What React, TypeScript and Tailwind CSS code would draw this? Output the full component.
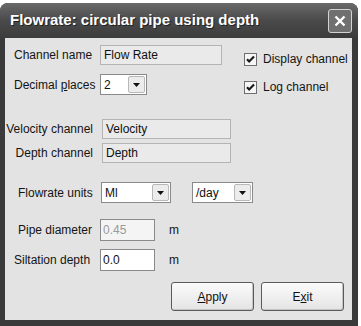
import React from "react";

function Arrow() {
  return (
    <svg width="7" height="4" viewBox="0 0 7 4">
      <path d="M0 0h7L3.5 4z" fill="#111" />
    </svg>
  );
}

function Select({ value, width }: { value: string; width: number }) {
  return (
    <div
      className="flex items-center h-[21px] bg-white border border-[#8a8a8a] p-[1px]"
      style={{ width }}
    >
      <span className="flex-1 pl-[2px] text-[#111]">{value}</span>
      <div className="w-[17px] h-full flex items-center justify-center bg-[#ececec] border border-[#b8b8b8] rounded-[2px]">
        <Arrow />
      </div>
    </div>
  );
}

function ReadonlyField({ value, width }: { value: string; width: number }) {
  return (
    <div
      className="h-[20px] flex items-center pl-[3px] bg-[#eaeaea] border border-[#b4b4b4] text-[#111]"
      style={{ width }}
    >
      {value}
    </div>
  );
}

function TextField({ value, disabled }: { value: string; disabled?: boolean }) {
  return (
    <div
      className={
        "w-[55px] h-[22px] flex items-center pl-[2px] border border-[#8a8a8a] " +
        (disabled ? "bg-[#f4f4f4] text-[#9a9a9a]" : "bg-white text-[#111]")
      }
    >
      {value}
    </div>
  );
}

function Check({ label }: { label: string }) {
  return (
    <div className="flex items-center h-[20px]">
      <div className="w-[13px] h-[13px] bg-[#f6f6f6] border border-[#6e6e6e] flex items-center justify-center">
        <svg width="9" height="9" viewBox="0 0 9 9">
          <path d="M1 4.2l2.2 2.3L8 1.6" stroke="#1a1a1a" strokeWidth="2.2" fill="none" />
        </svg>
      </div>
      <span className="ml-[6px]">{label}</span>
    </div>
  );
}

function Button({ children }: { children: React.ReactNode }) {
  return (
    <div className="w-[83px] h-[29px] flex items-center justify-center rounded-[3px] border border-[#5a5a5a] bg-gradient-to-b from-[#fbfbfb] to-[#e4e4e4] shadow-[inset_-1px_-1px_0_#c4c4c4] text-[#111]">
      {children}
    </div>
  );
}

export default function App() {
  return (
    <div className="w-[361px] h-[326px] bg-white font-['Liberation_Sans',Arial,sans-serif] text-[12px] text-[#141414]">
      <div className="w-[358px] h-[323px] mt-[3px] flex flex-col rounded-t-[8px] bg-[#3a3a3a] overflow-hidden">
        <div className="h-[35px] flex items-center justify-between pl-[10px] pr-[6px] bg-gradient-to-b from-[#6a6a6a] via-[#4a4a4a] to-[#3c3c3c]">
          <span className="text-white font-bold text-[15px] [text-shadow:1px_1px_0_#222]">
            Flowrate: circular pipe using depth
          </span>
          <div className="w-[24px] h-[24px] rounded-[3px] border border-[#d4d4d4] bg-[#707070] flex items-center justify-center">
            <svg width="12" height="12" viewBox="0 0 12 12">
              <path d="M1.5 1.5l9 9M10.5 1.5l-9 9" stroke="#fff" strokeWidth="2.4" />
            </svg>
          </div>
        </div>
        <div className="flex-1 ml-[5px] mr-[6px] mb-[6px] bg-[#e3e3e3] flex flex-col">
          <div className="flex pt-[7px]">
            <div className="w-[239px] pl-[9px] flex flex-col">
              <div className="flex items-center">
                <span className="w-[86px]">Channel name</span>
                <ReadonlyField value="Flow Rate" width={122} />
              </div>
              <div className="flex items-center mt-[9px]">
                <span className="w-[86px]">
                  Decimal <span className="underline">p</span>laces
                </span>
                <Select value="2" width={47} />
              </div>
            </div>
            <div className="flex flex-col pt-[4px]">
              <Check label="Display channel" />
              <div className="mt-[8px]">
                <Check label="Log channel" />
              </div>
            </div>
          </div>

          <div className="flex items-center mt-[22px]">
            <span className="w-[88px] text-right">Velocity channel</span>
            <div className="ml-[9px]">
              <ReadonlyField value="Velocity" width={129} />
            </div>
          </div>
          <div className="flex items-center mt-[4px]">
            <span className="w-[88px] text-right">Depth channel</span>
            <div className="ml-[9px]">
              <ReadonlyField value="Depth" width={129} />
            </div>
          </div>

          <div className="flex items-center mt-[19px]">
            <span className="w-[96px] pl-[13px]">Flowrate units</span>
            <Select value="Ml" width={70} />
            <div className="ml-[21px]">
              <Select value="/day" width={61} />
            </div>
          </div>

          <div className="flex items-center mt-[16px]">
            <span className="w-[95px] pl-[13px]">Pipe diameter</span>
            <TextField value="0.45" disabled />
            <span className="ml-[14px]">m</span>
          </div>
          <div className="flex items-center mt-[8px]">
            <span className="w-[95px] pl-[9px]">Siltation depth</span>
            <TextField value="0.0" />
            <span className="ml-[14px]">m</span>
          </div>

          <div className="flex justify-end gap-[7px] mt-[11px] pr-[8px]">
            <Button>
              <span className="underline">A</span>pply
            </Button>
            <Button>
              E<span className="underline">x</span>it
            </Button>
          </div>
        </div>
      </div>
    </div>
  );
}
